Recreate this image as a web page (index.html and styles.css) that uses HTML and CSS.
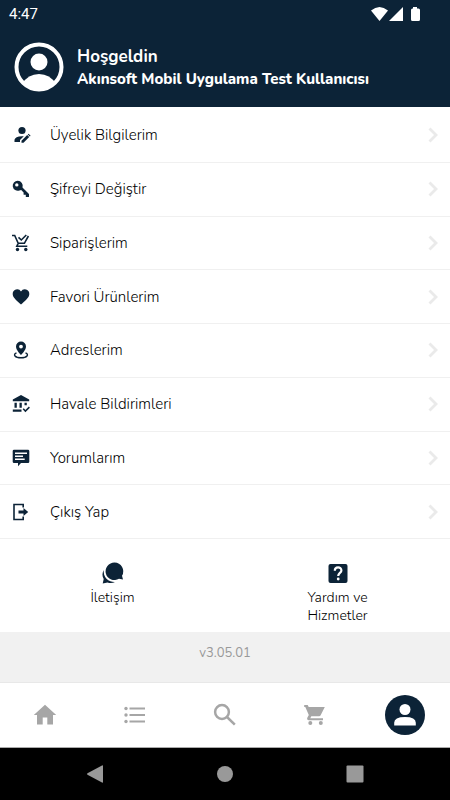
FILE: index.html
```html
<!DOCTYPE html>
<html lang="tr">
<head>
<meta charset="utf-8">
<meta name="viewport" content="width=device-width, initial-scale=1">
<title>Hesabım</title>
<link rel="stylesheet" href="styles.css">
</head>
<body>
<svg class="defs" aria-hidden="true">
  <symbol id="chevron" viewBox="0 0 10 16"><path d="M1.500 1.500 8 8l-6.500 6.500" fill="none" stroke="currentColor" stroke-width="2.800"/></symbol>
</svg>
<header class="header">
  <div class="status">
    <span>4:47</span>
    <svg class="status-icons" viewBox="0 0 50 16" aria-hidden="true">
      <path d="M0 4.500Q8.500-2.500 17 4.500L8.500 15Z"/>
      <path d="M18 15 32 1v14Z"/>
      <path d="M42 1h4v1.500h1.500q1.500 0 1.500 1.500v9.500q0 1.500-1.500 1.500h-6q-1.500 0-1.500-1.500V4q0-1.500 1.500-1.500H42Z"/>
    </svg>
  </div>
  <div class="profile">
    <svg class="avatar" viewBox="0 0 50 50" aria-hidden="true">
      <defs><clipPath id="disc"><circle cx="25" cy="25" r="23"/></clipPath></defs>
      <circle cx="25" cy="25" r="22.500" fill="none" stroke="currentColor" stroke-width="4"/>
      <circle cx="25" cy="20" r="8.500"/>
      <path clip-path="url(#disc)" d="M8 42Q14 32 25 32t17 10v8H8Z"/>
    </svg>
    <div>
      <h1 class="welcome">Hoşgeldin</h1>
      <p class="username">Akınsoft Mobil Uygulama Test Kullanıcısı</p>
    </div>
  </div>
</header>

<main class="main">
  <nav class="list" aria-label="Hesap">
    <a class="row" href="#uyelik">
      <svg class="icon" viewBox="0 0 18 18"><circle cx="10" cy="4.500" r="3.600"/><path d="M2.500 16v-2.200Q3 10.500 10 10.200h1.800L8 14v2Z"/><path d="M9.500 16.800v-2l5.700-5.700 2 2-5.700 5.700Zm6.300-8.300.8-.8 2 2-.8.8Z"/></svg>
      <span class="label">Üyelik Bilgilerim</span><svg class="chevron"><use href="#chevron"/></svg>
    </a>
    <a class="row" href="#sifre">
      <svg class="icon" viewBox="0 0 18 18"><path fill-rule="evenodd" d="M5.800.8a5 5 0 0 1 4.700 6.600l6.500 6.500V17h-3.200v-2.200h-2.200v-2.300L9.200 10l-1.800.5A5 5 0 1 1 5.800.8ZM4.800 3.200a1.700 1.700 0 1 0 0 3.400 1.700 1.700 0 0 0 0-3.400Z"/></svg>
      <span class="label">Şifreyi Değiştir</span><svg class="chevron"><use href="#chevron"/></svg>
    </a>
    <a class="row" href="#siparis">
      <svg class="icon" viewBox="0 0 18 18"><path fill="none" stroke="currentColor" stroke-width="1.600" d="M0 1.500h2.700l3.500 7.800h6.200l4-7.300M6.200 9.300 4.800 12.200h10.500M6.500 3.300 9.300 6l5-5"/><circle cx="5.500" cy="15.500" r="1.700"/><circle cx="13.800" cy="15.500" r="1.700"/></svg>
      <span class="label">Siparişlerim</span><svg class="chevron"><use href="#chevron"/></svg>
    </a>
    <a class="row" href="#favori">
      <svg class="icon" viewBox="0 0 18 18"><path d="m9 16.500-1.200-1.100C3.300 11.400.7 9 .7 6A4.500 4.500 0 0 1 9 3.400 4.500 4.500 0 0 1 17.300 6c0 3-2.600 5.400-7.100 9.400Z"/></svg>
      <span class="label">Favori Ürünlerim</span><svg class="chevron"><use href="#chevron"/></svg>
    </a>
    <a class="row" href="#adres">
      <svg class="icon" viewBox="0 0 18 18"><path fill-rule="evenodd" d="M9 .5a5 5 0 0 1 5 5C14 9.200 9 14 9 14S4 9.200 4 5.500a5 5 0 0 1 5-5Zm0 3.200a1.900 1.900 0 1 0 0 3.800 1.900 1.900 0 0 0 0-3.800Z"/><path fill="none" stroke="currentColor" stroke-width="1.400" d="M4.500 11.800c-4 1.700-1.500 5 4.500 5s8.500-3.300 4.500-5"/></svg>
      <span class="label">Adreslerim</span><svg class="chevron"><use href="#chevron"/></svg>
    </a>
    <a class="row" href="#havale">
      <svg class="icon" viewBox="0 0 18 18"><path d="m9 0 8.200 4.400v1.800H.8V4.400ZM2.500 7.800h2.300v5H2.500Zm5 0h2.300v5H7.500Zm5 0h2.300v2.400h-2.300ZM.8 14.500h8.700v2.300H.8Z"/><path fill="none" stroke="currentColor" stroke-width="1.500" d="m11.200 13.800 2.200 2.300 4-4"/></svg>
      <span class="label">Havale Bildirimleri</span><svg class="chevron"><use href="#chevron"/></svg>
    </a>
    <a class="row" href="#yorum">
      <svg class="icon" viewBox="0 0 18 18"><path fill-rule="evenodd" d="M2 .8h14q1.300 0 1.300 1.300v10.600q0 1.300-1.300 1.300h-7L6 17.300V14H2Q.7 14 .7 12.700V2.100Q.7.800 2 .8ZM3 3.500V5h12V3.500Zm0 3V8h8V6.500Zm0 3V11h9.700V9.500Z"/></svg>
      <span class="label">Yorumlarım</span><svg class="chevron"><use href="#chevron"/></svg>
    </a>
    <a class="row" href="#cikis">
      <svg class="icon" viewBox="0 0 18 18"><path fill="none" stroke="currentColor" stroke-width="1.600" d="M11.200 4.500V1.500H2v15h9.200v-3"/><path d="M6.500 7.600h5V5l4.700 4-4.700 4v-2.600h-5Z"/></svg>
      <span class="label">Çıkış Yap</span><svg class="chevron"><use href="#chevron"/></svg>
    </a>
  </nav>

  <div class="links">
    <a class="link" href="#iletisim">
      <svg class="link-icon" viewBox="0 0 24 24"><path d="M13.500 1.500a8.800 8.800 0 0 1 7.500 13.300l1 3.800-4-.8A8.800 8.800 0 1 1 13.500 1.500Z"/><path d="M2.800 9a10.500 10.500 0 0 0 11.200 12c-2.200 1.200-5 1.400-7.500.4l-4.800 1 1-4.300C1 15.100 1.100 11.800 2.800 9Z"/></svg>
      <span class="link-label">İletişim</span>
    </a>
    <a class="link" href="#yardim">
      <svg class="link-icon" viewBox="0 0 24 24"><rect x="2.500" y="3" width="19" height="19" rx="2"/><path fill="none" stroke="#fff" stroke-width="2.200" d="M8.800 9.700c0-4.400 6.600-4.400 6.600-.3 0 2.500-3.200 2.600-3.200 5.600"/><circle cx="12.200" cy="18" r="1.400" fill="#fff"/></svg>
      <span class="link-label">Yardım ve Hizmetler</span>
    </a>
  </div>
</main>

<footer class="version">v3.05.01</footer>

<nav class="tabs" aria-label="Ana menü">
  <a class="tab" href="#home" aria-label="Ana sayfa"><svg viewBox="0 0 24 24"><path d="M9.700 21.500v-7h4.600v7H20V12h3.200L12 1.800.8 12H4v9.500Z"/></svg></a>
  <a class="tab" href="#categories" aria-label="Kategoriler"><svg viewBox="0 0 24 24"><circle cx="3" cy="5.500" r="1.700"/><circle cx="3" cy="12" r="1.700"/><circle cx="3" cy="18.500" r="1.700"/><path d="M6.500 4.500H22v2H6.500Zm0 6.500H22v2H6.500Zm0 6.500H22v2H6.500Z"/></svg></a>
  <a class="tab" href="#search" aria-label="Ara"><svg viewBox="0 0 24 24"><g fill="none" stroke="currentColor" stroke-width="2.500"><circle cx="9" cy="9" r="6.900"/><path d="m14 14 7.800 7.700"/></g></svg></a>
  <a class="tab" href="#cart" aria-label="Sepet"><svg viewBox="0 0 24 24"><path d="M1.200 2h3.500l1 2h16.100L17.500 12.500q-.5.700-1.300.7H8.300l-1 2H20v2H6q-2.500-.4-1.700-2.500l1.500-2.800L2.300 4H1.200Z"/><circle cx="7.300" cy="20" r="2"/><circle cx="17.800" cy="20" r="2"/></svg></a>
  <a class="tab tab-active" href="#account" aria-label="Hesabım" aria-current="page"><svg viewBox="0 0 24 24"><circle cx="12" cy="6.500" r="5.500"/><path d="M1.200 22.500v-2.700q0-5.700 10.800-5.700t10.800 5.700v2.700Z"/></svg></a>
</nav>

<div class="system">
  <button class="system-button" aria-label="Geri"><svg viewBox="0 0 18 18"><path d="M17 1v16q0 1-1 .5L1.500 9.800q-1.200-.8 0-1.600L16 .5q1-.5 1 .5Z"/></svg></button>
  <button class="system-button" aria-label="Giriş ekranı"><svg viewBox="0 0 18 18"><circle cx="9" cy="9" r="8"/></svg></button>
  <button class="system-button" aria-label="Son uygulamalar"><svg viewBox="0 0 18 18"><rect x=".5" y=".5" width="17" height="17" rx="1"/></svg></button>
</div>
</body>
</html>
```
FILE: styles.css
```css
* {
  box-sizing: border-box;
}

body {
  margin: 0;
  min-height: 100vh;
  display: flex;
  flex-direction: column;
  background: #fff;
  color: #000;
  font-family: Nunito, Lato, "Open Sans", sans-serif;
  font-size: 15px;
  font-weight: 300;
}

svg {
  display: block;
  fill: currentColor;
}

a {
  color: inherit;
  text-decoration: none;
}

.defs {
  display: none;
}

.header {
  background: #0c2337;
  color: #fff;
  padding-bottom: 15px;
}

.status {
  display: flex;
  align-items: center;
  justify-content: space-between;
  height: 28px;
  padding: 0 29px 0 9px;
  font-family: Roboto, sans-serif;
  font-size: 15px;
  font-weight: 400;
}

.status-icons {
  width: 50px;
  height: 16px;
}

.profile {
  display: flex;
  align-items: center;
  gap: 13px;
  padding: 14px 14px 0;
}

.avatar {
  width: 50px;
  height: 50px;
}

.welcome,
.username {
  margin: 0;
  line-height: 22px;
}

.welcome {
  padding-top: 2px;
  font-size: 17px;
  font-weight: 700;
}

.username {
  font-size: 15px;
  font-weight: 800;
}

.main {
  flex: 1;
  display: flex;
  flex-direction: column;
}

.list {
  flex: 1;
  display: flex;
  flex-direction: column;
  padding-top: 2px;
}

.row {
  flex: 1;
  display: flex;
  align-items: center;
  min-height: 48px;
  padding: 0 12px;
  border-bottom: 1px solid #f0f0f0;
}

.icon {
  width: 18px;
  height: 18px;
  overflow: visible;
  color: #0c2337;
}

.label {
  flex: 1;
  padding-left: 20px;
}

.chevron {
  width: 10px;
  height: 16px;
  color: #eaeaea;
}

.links {
  display: grid;
  grid-template-columns: 1fr 1fr;
  padding: 22px 0 7px;
}

.link {
  display: flex;
  flex-direction: column;
  align-items: center;
  gap: 4px;
}

.link-icon {
  width: 24px;
  height: 24px;
  color: #0c2337;
}

.link-label {
  max-width: 80px;
  font-size: 14px;
  line-height: 18px;
  text-align: center;
}

.version {
  padding: 11px 0 19px;
  background: #f1f1f1;
  color: #999;
  font-size: 13px;
  font-weight: 400;
  line-height: 20px;
  text-align: center;
}

.tabs {
  display: grid;
  grid-template-columns: repeat(5, 1fr);
  place-items: center;
  height: 66px;
  border-top: 1px solid #e8e8e8;
  border-bottom: 1px solid #aaa;
}

.tab {
  color: #a6a6a6;
}

.tab svg {
  width: 24px;
  height: 24px;
}

.tab-active {
  padding: 8px;
  border-radius: 50%;
  background: #0c2337;
  color: #fff;
}

.system {
  display: grid;
  grid-template-columns: repeat(3, 1fr);
  place-items: center;
  height: 52px;
  padding: 0 30px;
  background: #000;
}

.system-button {
  padding: 0;
  border: 0;
  background: none;
  color: #999;
}

.system-button svg {
  width: 18px;
  height: 18px;
}
```
